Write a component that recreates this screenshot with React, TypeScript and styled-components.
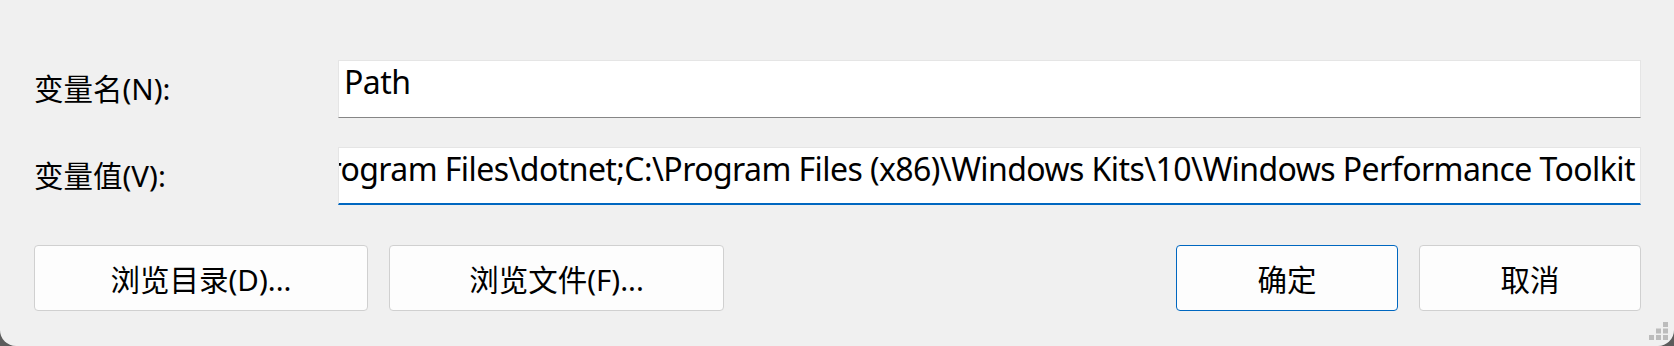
import React from "react";
import styled, { createGlobalStyle } from "styled-components";

const GlobalStyle = createGlobalStyle`
  html, body { margin: 0; padding: 0; background: #5c5c5c; }
  #root { width: 1674px; height: 346px; }
`;

const Dialog = styled.div`
  position: relative;
  box-sizing: border-box;
  width: 1674px;
  height: 346px;
  padding: 60px 33px 0 34px;
  background: #f0f0f0;
  border-radius: 0 0 16px 16px;
  font-family: "Noto Sans", "Noto Sans CJK SC", sans-serif;
  color: #000;
  display: flex;
  flex-direction: column;
`;

const Form = styled.div`
  display: grid;
  grid-template-columns: 304px 1fr;
  row-gap: 29px;
  align-items: center;
`;

const Label = styled.label`
  font-size: 29.5px;
  line-height: 40px;
  white-space: nowrap;
`;

const Field = styled.div<{ $focused?: boolean }>`
  box-sizing: border-box;
  height: 58px;
  background: #ffffff;
  border: 1px solid #e5e5e5;
  border-bottom: ${(p) => (p.$focused ? "2px solid #0067c0" : "1px solid #868686")};
  padding: 1px 5px 0 5px;
  display: flex;
  justify-content: ${(p) => (p.$focused ? "flex-end" : "flex-start")};
  overflow: hidden;
`;

const FieldText = styled.span`
  flex-shrink: 0;
  white-space: nowrap;
  font-size: 32px;
  letter-spacing: -0.57px;
  line-height: 40px;
`;

const ButtonRow = styled.div`
  margin-top: 40px;
  display: flex;
  gap: 21px;
`;

const Button = styled.button<{ $w: number; $primary?: boolean; $push?: boolean }>`
  box-sizing: border-box;
  width: ${(p) => p.$w}px;
  height: 66px;
  margin-left: ${(p) => (p.$push ? "auto" : "0")};
  padding: 0;
  background: #fdfdfd;
  border: 1px solid ${(p) => (p.$primary ? "#0067c0" : "#d0d0d0")};
  border-radius: 4px;
  font-family: "Noto Sans", "Noto Sans CJK SC", sans-serif;
  font-size: 29.5px;
  color: #000;
  cursor: default;
`;

const Gripper = styled.svg`
  position: absolute;
  right: 6px;
  bottom: 6px;
`;

const pathValue =
  "%SystemRoot%\\system32;%SystemRoot%;C:\\Program Files\\dotnet;C:\\Program Files (x86)\\Windows Kits\\10\\Windows Performance Toolkit";

export default function App() {
  return (
    <>
      <GlobalStyle />
      <Dialog>
        <Form>
          <Label>变量名(N):</Label>
          <Field>
            <FieldText>Path</FieldText>
          </Field>
          <Label>变量值(V):</Label>
          <Field $focused>
            <FieldText>{pathValue}</FieldText>
          </Field>
        </Form>
        <ButtonRow>
          <Button $w={334}>浏览目录(D)...</Button>
          <Button $w={335}>浏览文件(F)...</Button>
          <Button $w={222} $primary $push>确定</Button>
          <Button $w={222}>取消</Button>
        </ButtonRow>
        <Gripper width="19" height="18" viewBox="0 0 19 18">
          <g fill="#bcbcbc">
            <rect x="14" y="0" width="5" height="5" />
            <rect x="7" y="6.5" width="5" height="5" />
            <rect x="14" y="6.5" width="5" height="5" />
            <rect x="0" y="13" width="5" height="5" />
            <rect x="7" y="13" width="5" height="5" />
            <rect x="14" y="13" width="5" height="5" />
          </g>
        </Gripper>
      </Dialog>
    </>
  );
}
